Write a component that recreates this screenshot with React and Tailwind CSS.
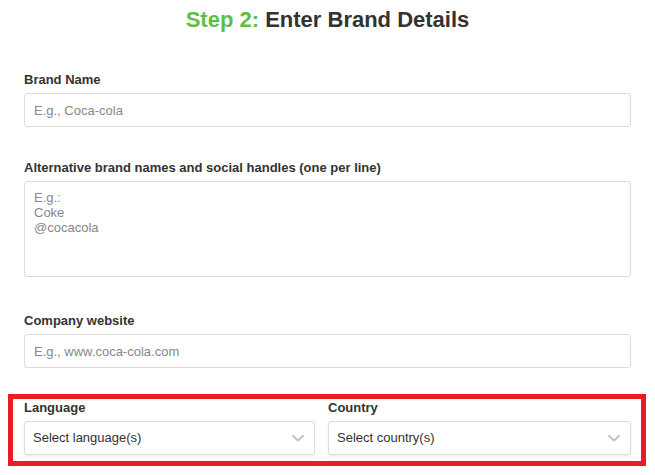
import React from 'react';

const Label = ({ children }) => (
  <label className="block pt-px text-[13px] leading-4 font-bold text-[#333]">{children}</label>
);

const inputCls =
  'block w-full h-[34px] px-[9px] border border-[#dcdcdc] rounded-[3px] bg-white text-[13px] text-[#333] placeholder:text-[#888] outline-none';

const FakeSelect = ({ text }) => (
  <button
    type="button"
    className="flex items-center justify-between w-full h-[34px] pl-2 pr-[10px] border border-[#dcdcdc] rounded-[3px] bg-white shadow-[0_1px_2px_rgba(0,0,0,0.08)] text-left"
  >
    <span className="text-[13px] text-[#333]">{text}</span>
    <svg width="12" height="7" viewBox="0 0 12 7" fill="none">
      <polyline points="1,1 6,5.5 11,1" stroke="#c4c4c4" strokeWidth="2" strokeLinecap="round" strokeLinejoin="round" />
    </svg>
  </button>
);

export default function App() {
  return (
    <div
      className="w-[655px] h-[475px] bg-white overflow-hidden"
      style={{ fontFamily: '"Liberation Sans", Arial, sans-serif' }}
    >
      {/* Heading */}
      <h1 className="pt-[7px] text-center text-[22px] leading-[26px] font-bold text-[#333]">
        <span className="text-[#5bbf48]">Step 2:</span> Enter Brand Details
      </h1>

      <div className="px-6">
        {/* Brand name */}
        <div className="mt-[38px]">
          <Label>Brand Name</Label>
          <input className={`${inputCls} mt-[5px]`} placeholder="E.g., Coca-cola" />
        </div>

        {/* Alternative names */}
        <div className="mt-8">
          <Label>Alternative brand names and social handles (one per line)</Label>
          <textarea
            className="block w-full h-[96px] mt-[5px] px-[9px] pt-2 border border-[#dcdcdc] rounded-[3px] bg-white text-[13px] leading-[15px] text-[#333] placeholder:text-[#888] outline-none resize-none"
            placeholder={'E.g.:\nCoke\n@cocacola'}
          />
        </div>

        {/* Website */}
        <div className="mt-[35px]">
          <Label>Company website</Label>
          <input className={`${inputCls} mt-[5px]`} placeholder="E.g., www.coca-cola.com" />
        </div>
      </div>

      {/* Highlighted language / country row */}
      <div className="mt-[26px] ml-2 mr-[9px] border-[5px] border-[#ed1c24] pl-[11px] pr-[10px] pb-[6px]">
        <div className="grid grid-cols-[291px_303px] gap-[13px]">
          <div>
            <Label>Language</Label>
            <div className="mt-[5px]">
              <FakeSelect text="Select language(s)" />
            </div>
          </div>
          <div>
            <Label>Country</Label>
            <div className="mt-[5px]">
              <FakeSelect text="Select country(s)" />
            </div>
          </div>
        </div>
      </div>
    </div>
  );
}
